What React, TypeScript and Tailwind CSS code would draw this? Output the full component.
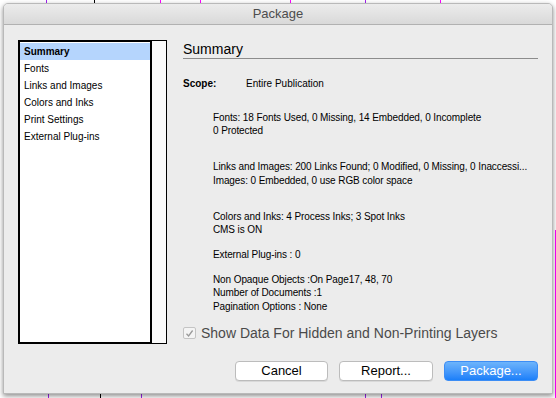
import React from 'react';

const listItems = ['Summary', 'Fonts', 'Links and Images', 'Colors and Inks', 'Print Settings', 'External Plug-ins'];

const font = { fontFamily: '"Liberation Sans", Arial, sans-serif' };

export default function App() {
  return (
    <div className="relative w-[556px] h-[398px] bg-white overflow-hidden px-[3px] pt-[3px] pb-[4px]" style={font}>
      {/* canvas guides behind the dialog */}
      <div className="absolute top-0 left-[46px] w-px h-[3px] bg-[#a020f0]" />
      <div className="absolute top-0 left-[94px] w-px h-[3px] bg-[#000]" />
      <div className="absolute top-0 left-[160px] w-px h-[3px] bg-[#ff00ff]" />
      <div className="absolute top-0 left-[200px] w-px h-[3px] bg-[#ff00ff]" />
      <div className="absolute top-0 left-[290px] w-px h-[3px] bg-[#ff00ff]" />
      <div className="absolute top-0 left-[365px] w-px h-[3px] bg-[#a020f0]" />
      <div className="absolute top-0 left-[440px] w-px h-[3px] bg-[#ff00ff]" />
      <div className="absolute top-[230px] right-0 w-px h-[168px] bg-[#ff00ff]" />
      <div className="absolute bottom-0 left-[48px] w-px h-[4px] bg-[#a020f0]" />
      <div className="absolute bottom-0 left-[100px] w-px h-[4px] bg-[#000]" />
      <div className="absolute bottom-0 left-[141px] w-px h-[4px] bg-[#a020f0]" />
      <div className="absolute bottom-0 left-[365px] w-px h-[4px] bg-[#a020f0]" />
      <div className="absolute bottom-0 left-[381px] w-px h-[4px] bg-[#a020f0]" />

      <div className="relative flex flex-col h-full w-full rounded-t-[5px] bg-[#ececec] border border-[#b9b9b9] shadow-[0_2px_5px_rgba(0,0,0,0.45)] overflow-hidden">
        {/* title bar */}
        <div className="h-[21px] shrink-0 flex items-center justify-center bg-gradient-to-b from-[#ececec] to-[#d9d9d9] border-b border-[#b1b1b1]">
          <span className="text-[13px] text-[#4d4d4d]">Package</span>
        </div>

        <div className="flex flex-1 pl-[14px] pr-[14px] pt-[15px]">
          {/* section list */}
          <div className="flex h-[304px] w-[149px] shrink-0">
            <div className="w-[134px] h-full bg-white border-2 border-black pt-px">
              {listItems.map((item, i) => (
                <div
                  key={item}
                  className={`h-[17px] flex items-center pl-[4px] text-[10px] text-black ${i === 0 ? 'bg-[#b5d5fd] font-bold' : ''}`}
                >
                  {item}
                </div>
              ))}
            </div>
            <div className="flex-1 h-full bg-[#fafafa] border-y border-r border-black" />
          </div>

          {/* summary panel */}
          <div className="flex-1 ml-[16px] flex flex-col">
            <div className="text-[14px] text-black leading-[17px] pt-[1px] border-b border-[#8c8c8c]">Summary</div>

            <div className="flex text-[10px] text-black mt-[18px] leading-[13px]">
              <span className="w-[63px] font-bold">Scope:</span>
              <span>Entire Publication</span>
            </div>

            <div className="pl-[30px] text-[10px] text-black leading-[13.3px] tracking-[-0.1px]">
              <div className="mt-[21px]">
                <div>Fonts: 18 Fonts Used, 0 Missing, 14 Embedded, 0 Incomplete</div>
                <div>0 Protected</div>
              </div>
              <div className="mt-[22.7px]">
                <div>Links and Images: 200 Links Found; 0 Modified, 0 Missing, 0 Inaccessi...</div>
                <div>Images: 0 Embedded, 0 use RGB color space</div>
              </div>
              <div className="mt-[23.3px]">
                <div>Colors and Inks: 4 Process Inks; 3 Spot Inks</div>
                <div>CMS is ON</div>
              </div>
              <div className="mt-[11px]">
                <div>External Plug-ins : 0</div>
              </div>
              <div className="mt-[12px]">
                <div>Non Opaque Objects :On Page17, 48, 70</div>
                <div>Number of Documents :1</div>
                <div>Pagination Options : None</div>
              </div>
            </div>

            <div className="flex items-center mt-[10px]">
              <div className="w-[13px] h-[12px] rounded-[2px] border border-[#c4c4c4] bg-[#f4f4f4] flex items-center justify-center">
                <svg width="9" height="9" viewBox="0 0 9 9">
                  <path d="M1.5 4.8 L3.6 7 L7.6 1.5" fill="none" stroke="#9a9a9a" strokeWidth="1.3" />
                </svg>
              </div>
              <span className="ml-[5px] text-[14px] text-[#4a4a4a]">Show Data For Hidden and Non-Printing Layers</span>
            </div>

            <div className="flex justify-end gap-[11px] mt-[17px]">
              <button className="w-[93px] h-[20px] rounded-[4px] bg-white border border-[#bcbcbc] shadow-[0_1px_0_rgba(0,0,0,0.08)] text-[13px] text-black leading-none">
                Cancel
              </button>
              <button className="w-[94px] h-[20px] rounded-[4px] bg-white border border-[#bcbcbc] shadow-[0_1px_0_rgba(0,0,0,0.08)] text-[13px] text-black leading-none">
                Report...
              </button>
              <button className="w-[94px] h-[20px] rounded-[4px] bg-gradient-to-b from-[#6db4fb] to-[#1a7ff9] border border-[#3c8df5] text-[13px] text-white leading-none">
                Package...
              </button>
            </div>
          </div>
        </div>
      </div>
    </div>
  );
}
